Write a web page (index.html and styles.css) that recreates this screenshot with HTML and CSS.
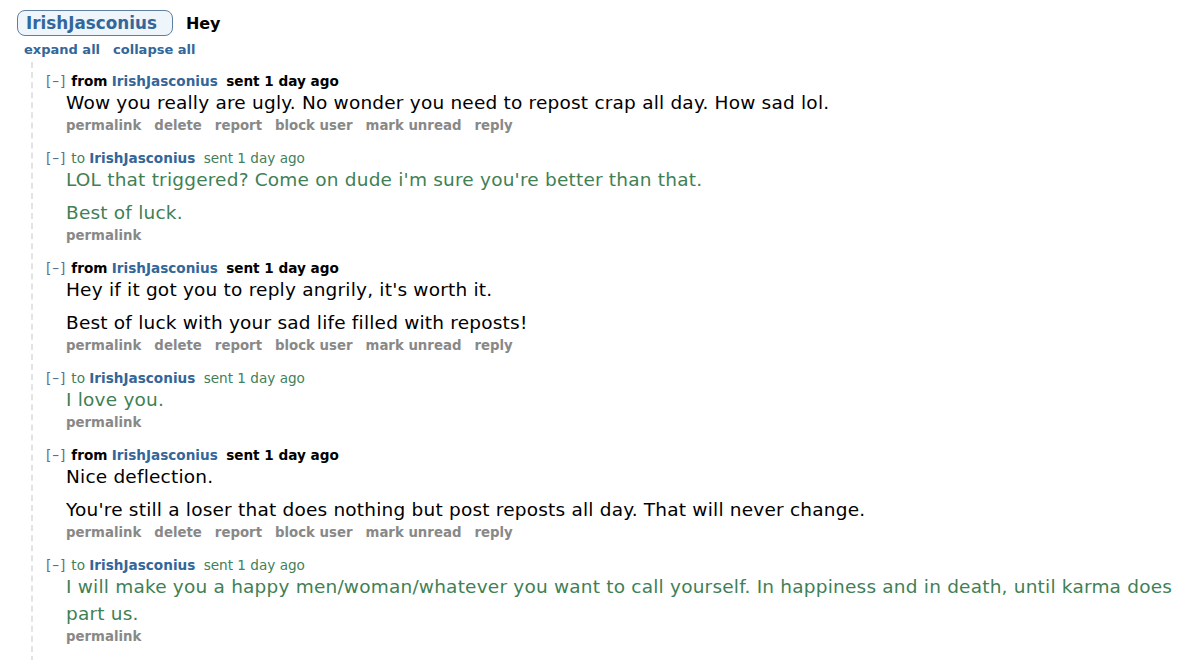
FILE: index.html
```html
<!DOCTYPE html>
<html lang="en">
<head>
    <meta charset="UTF-8">
    <title>messages: IrishJasconius</title>
    <link rel="stylesheet" href="styles.css">
</head>
<body>
    <div class="thread">
        <div class="subject-row">
            <span class="pill">IrishJasconius</span>
            <span class="subject">Hey</span>
        </div>
        <div class="expanders">
            <a href="#">expand all</a>
            <a href="#">collapse all</a>
        </div>

        <div class="messages">
            <div class="message">
                <div class="tagline"><span class="toggle">[–]</span> <b>from</b> <a class="author" href="#">IrishJasconius</a> <b class="age">sent 1 day ago</b></div>
                <div class="body">
                    <p>Wow you really are ugly. No wonder you need to repost crap all day. How sad lol.</p>
                </div>
                <ul class="buttons">
                    <li>permalink</li><li>delete</li><li>report</li><li>block user</li><li>mark unread</li><li>reply</li>
                </ul>
            </div>

            <div class="message sent">
                <div class="tagline"><span class="toggle">[–]</span> to <a class="author" href="#">IrishJasconius</a> <span class="age">sent 1 day ago</span></div>
                <div class="body">
                    <p>LOL that triggered? Come on dude i'm sure you're better than that.</p>
                    <p>Best of luck.</p>
                </div>
                <ul class="buttons">
                    <li>permalink</li>
                </ul>
            </div>

            <div class="message">
                <div class="tagline"><span class="toggle">[–]</span> <b>from</b> <a class="author" href="#">IrishJasconius</a> <b class="age">sent 1 day ago</b></div>
                <div class="body">
                    <p>Hey if it got you to reply angrily, it's worth it.</p>
                    <p>Best of luck with your sad life filled with reposts!</p>
                </div>
                <ul class="buttons">
                    <li>permalink</li><li>delete</li><li>report</li><li>block user</li><li>mark unread</li><li>reply</li>
                </ul>
            </div>

            <div class="message sent">
                <div class="tagline"><span class="toggle">[–]</span> to <a class="author" href="#">IrishJasconius</a> <span class="age">sent 1 day ago</span></div>
                <div class="body">
                    <p>I love you.</p>
                </div>
                <ul class="buttons">
                    <li>permalink</li>
                </ul>
            </div>

            <div class="message">
                <div class="tagline"><span class="toggle">[–]</span> <b>from</b> <a class="author" href="#">IrishJasconius</a> <b class="age">sent 1 day ago</b></div>
                <div class="body">
                    <p>Nice deflection.</p>
                    <p>You're still a loser that does nothing but post reposts all day. That will never change.</p>
                </div>
                <ul class="buttons">
                    <li>permalink</li><li>delete</li><li>report</li><li>block user</li><li>mark unread</li><li>reply</li>
                </ul>
            </div>

            <div class="message sent">
                <div class="tagline"><span class="toggle">[–]</span> to <a class="author" href="#">IrishJasconius</a> <span class="age">sent 1 day ago</span></div>
                <div class="body">
                    <p>I will make you a happy men/woman/whatever you want to call yourself. In happiness and in death, until karma does part us.</p>
                </div>
                <ul class="buttons">
                    <li>permalink</li>
                </ul>
            </div>
        </div>
    </div>
</body>
</html>
```

FILE: styles.css
```css
* {
    margin: 0;
    padding: 0;
    box-sizing: border-box;
}

body {
    font-family: "DejaVu Sans", Verdana, sans-serif;
    background: #fff;
    color: #000;
    height: 660px;
    overflow: hidden;
}

a {
    text-decoration: none;
    color: #369;
}

.thread {
    padding: 10px 0 0 17px;
}

.subject-row {
    display: flex;
    align-items: center;
    gap: 13px;
    height: 26px;
}

.pill {
    display: inline-block;
    height: 26px;
    line-height: 24px;
    padding: 0 15px 0 8px;
    border: 1px solid #5f7f9f;
    border-radius: 8px;
    background: #eef5fb;
    color: #369;
    font-size: 16.8px;
    font-weight: bold;
}

.subject {
    font-size: 16px;
    font-weight: bold;
}

.expanders {
    display: flex;
    gap: 13px;
    margin-top: 6px;
    padding-left: 7px;
    font-size: 13px;
    line-height: 16px;
    font-weight: bold;
}

.messages {
    margin: 4px 0 0 14px;
    padding: 11px 0 0 13px;
    border-left: 2px dashed #e3e3e3;
    min-height: 600px;
}

.message {
    margin-bottom: 14px;
}

.tagline {
    font-size: 13.6px;
    line-height: 16px;
    color: #000;
}

.toggle {
    display: inline-block;
    width: 21px;
    letter-spacing: 1px;
    color: #5a6f87;
    font-weight: normal;
}

.tagline .author {
    font-weight: bold;
    margin-right: 4px;
}

.body {
    padding-left: 20px;
}

.body p {
    font-size: 18.5px;
    letter-spacing: 0.2px;
    line-height: 27px;
    margin-bottom: 6px;
}

.body p:last-child {
    margin-bottom: 0;
}

.sent .tagline {
    color: #41805a;
}

.sent .toggle {
    color: #5a6f87;
}

.sent .body p {
    color: #3f8055;
}

.buttons {
    list-style: none;
    display: flex;
    gap: 13px;
    padding-left: 20px;
    font-size: 13.3px;
    line-height: 20px;
    font-weight: bold;
    color: #888;
}
```
